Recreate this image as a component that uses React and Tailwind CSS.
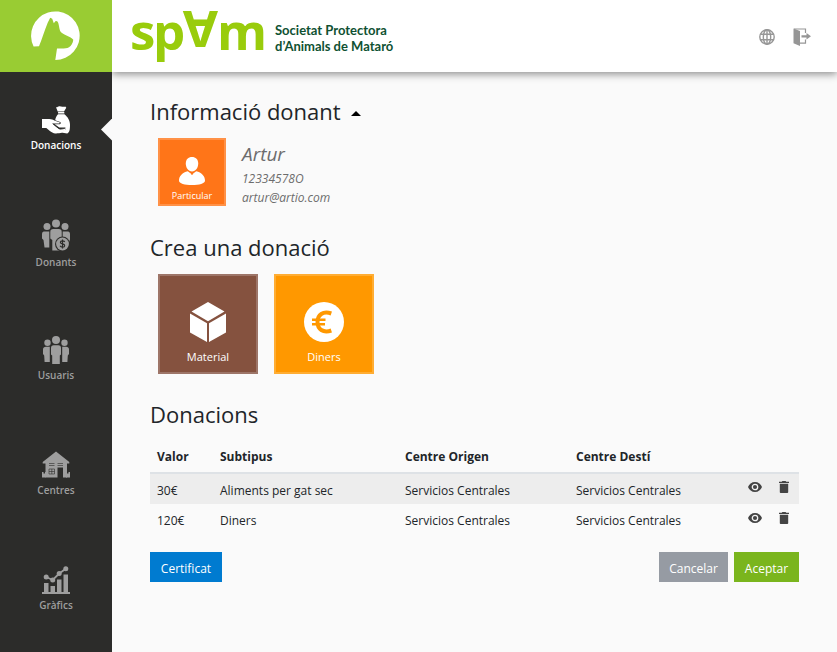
import { useState } from "react";

const HandIcon = () => (
  <svg viewBox="0 0 28 28" className="size-7" fill="currentColor" aria-hidden="true">
    <path d="M14 1.2c1.2.4 1.900-.8 3.300-1 1.200-.2 2 .6 3.200.5 1.200-.2 2 .3 2.800-.1l1 1.200-2.300 3.600h-6.300z" />
    <rect x="16" y="6" width="6.400" height="1.400" rx=".5" />
    <path d="M16 8.300h6.400c3.300 2.500 5.600 6.500 5.600 10.500 0 4.500-.3 7.600-2.800 8.700l-7.700-1.200 5.800-2.700c1-.6.800-2-.5-2.200l-5.500.2-4.600-3.400h5c1.300-.2 1.500-1.800.4-2.200l-4.900-1.700c.3-2.300 1.300-4.500 2.800-6z" />
    <path d="M0 13h7.300c2.200 0 3.800.9 5.600 1.700l4.400 1.600c.8.300.6 1.200-.2 1.200h-6.600l5.800 4.900c.9.700 1.800.9 2.900.6l4.200-.8c.8-.1 1 .8.300 1.100l-4 3.300c-1.200.7-4.800 1-6.300.9-2.200-.2-4-1.400-5.800-2.800L4.300 22H0z" />
    <path d="m10.700 17.700 5.900 4.700c.8.600 1.800.8 2.900.6l3.300-.6" fill="none" stroke="#2c2c2a" strokeWidth=".9" />
  </svg>
);

const DonorsIcon = () => (
  <svg viewBox="0 0 28 31" className="h-8 w-7" fill="currentColor" aria-hidden="true">
    <circle cx="14" cy="4" r="4" />
    <circle cx="5" cy="7" r="3.500" />
    <circle cx="23" cy="7" r="3.500" />
    <path d="M0 14.500C0 12.500 1.200 12 3 12h4.300v16H2.500L1.500 20.500 0 19zM28 14.500c0-2-1.200-2.500-3-2.500h-4.300v16H25l3-8z" />
    <path d="M8.300 12.500c0-2.200 1-3 3-3h5.400c2 0 3 .8 3 3V31h-9.400V20.500l-2-1.500z" />
    <circle cx="20.500" cy="24.500" r="7.500" fill="#2c2c2a" />
    <circle cx="20.500" cy="24.500" r="6.400" />
    <path d="M22.700 22.500c-.4-.8-1.200-1.100-2.200-1.100-2.800 0-2.800 2.700 0 3 3 .4 2.800 3.200 0 3.200-1.200 0-2-.4-2.400-1.300M20.500 20v9" fill="none" stroke="#2c2c2a" strokeWidth="1.200" />
  </svg>
);

const UsersIcon = () => (
  <svg viewBox="0 0 28 28" className="size-7" fill="currentColor" aria-hidden="true">
    <circle cx="14" cy="4" r="4" />
    <circle cx="5.500" cy="6.700" r="3.200" />
    <circle cx="22.500" cy="6.700" r="3.200" />
    <path d="M1 13.500c0-2 1.200-2.800 3-2.800h3.800V26H2.600l-.4-6.400L1 18zM27 13.500c0-2-1.200-2.800-3-2.800h-3.800V26h5.200l.4-6.400L27 18z" />
    <path d="M9 12c0-2 1-2.800 2.700-2.800h4.600c1.700 0 2.700.8 2.700 2.800v6.500l-1.200 1V28h-7.600v-8.500L9 18.500z" />
  </svg>
);

const HouseIcon = () => (
  <svg viewBox="0 0 28 28" className="size-7" fill="currentColor" aria-hidden="true">
    <path d="M14 .5 27.300 11v1.500H25V26.500h-4V16.500h-5.500v10H3.500v-14H.7V11z" />
    <path d="M0 21h1.500v1.500H3V21h1v5.500H0zM24 21h1v1.500h1.500V21H28v5.500h-4z" />
    <path d="M7 12.500h5.500M15.500 12.500H21M15.500 14.500H21M7 14.500h5.500M7 18v5h5.500v-5zM9.800 18v5M7 20.500h5.500" fill="none" stroke="#2c2c2a" strokeWidth=".6" />
  </svg>
);

const ChartIcon = () => (
  <svg viewBox="0 0 28 28" className="size-7" fill="currentColor" aria-hidden="true">
    <path d="M0 26h28v2H0zM2 17h4.500v9H2zM8.500 20H13v6H8.500zM15 13.500h4.500V26H15zM21.500 8.500H26V26h-4.500z" />
    <circle cx="4.200" cy="11" r="2.500" />
    <circle cx="10.700" cy="14" r="2.500" />
    <circle cx="17.200" cy="7.500" r="2.500" />
    <circle cx="23.800" cy="2.700" r="2.500" />
    <path d="m4.200 11 6.500 3 6.500-6.500 6.600-4.800" fill="none" stroke="currentColor" strokeWidth="1.800" />
  </svg>
);

const GlobeIcon = () => (
  <svg viewBox="0 0 16 16" className="size-4" fill="none" stroke="currentColor" strokeWidth="1.400" aria-hidden="true">
    <circle cx="8" cy="8" r="7.200" />
    <ellipse cx="8" cy="8" rx="3.700" ry="7.200" />
    <path d="M1.500 5.300h13M1.500 10.700h13M8 1v14" />
  </svg>
);

const ExitIcon = () => (
  <svg viewBox="0 0 18 18" className="size-[18px]" fill="currentColor" aria-hidden="true">
    <path d="M.5.500 7 3v15l-6.500-2.800z" />
    <path d="M1 1h11.500v4M12.500 11.500v3.700H7" fill="none" stroke="currentColor" strokeWidth="1.200" />
    <path d="M8.500 7.200h5V5L18 8.300l-4.500 3.300V9.400h-5z" />
  </svg>
);

const EyeIcon = () => (
  <svg viewBox="0 0 14 10" className="h-[10px] w-[14px]" aria-hidden="true">
    <path d="M7 0C3.800 0 1.100 2.100 0 5c1.100 2.900 3.800 5 7 5s5.900-2.100 7-5c-1.100-2.900-3.800-5-7-5z" fill="currentColor" />
    <circle cx="7" cy="5" r="2.700" fill="none" stroke="#f4f4f4" strokeWidth="1.300" />
  </svg>
);

const TrashIcon = () => (
  <svg viewBox="0 0 10 12" className="h-3 w-[10px]" fill="currentColor" aria-hidden="true">
    <path d="M0 .8h2.700L3.400 0h3.200l.7.800H10V2H0zM.8 2.800h8.400v8.100c0 .7-.5 1.100-1.100 1.100H1.900C1.300 12 .8 11.600.8 10.900z" />
  </svg>
);

const PersonIcon = () => (
  <svg viewBox="0 0 26 28" className="h-7 w-[26px]" fill="currentColor" aria-hidden="true">
    <path d="M13 0c3.700 0 6.200 2.300 6.200 6.600S16.700 14.500 13 14.500 6.800 10.900 6.800 6.600 9.300 0 13 0z" />
    <path d="M8.800 14.200 13 17.500l4.200-3.300c5.300 1.200 8.800 4.800 8.800 9.300 0 3.300-5.800 4.500-13 4.500S0 26.800 0 23.500c0-4.500 3.500-8.100 8.800-9.300z" />
    <path d="m12.100 15.400.9.900.9-.9-.5 2.600h-.8z" fill="#ff7518" />
  </svg>
);

const BoxIcon = () => (
  <svg viewBox="0 0 36 40" className="h-10 w-9" fill="currentColor" aria-hidden="true">
    <path d="M18 0 34.500 9.500 18 19.300 1.500 9.500zM0 11.500l17 9.800V40L0 30.500zM36 11.500l-17 9.800V40l17-9.500z" />
  </svg>
);

const EuroIcon = () => (
  <svg viewBox="0 0 40 40" className="size-10" aria-hidden="true">
    <circle cx="20" cy="20" r="20" fill="#fff" />
    <path d="M27.300 11.500C19 8.500 13.500 13 13.500 20s5.500 11.500 13.800 8.500" fill="none" stroke="#ff9800" strokeWidth="4" />
    <path d="M8 17.700h13.500M8 22.300H21" fill="none" stroke="#ff9800" strokeWidth="2.500" />
  </svg>
);

const DogLogo = () => (
  <svg viewBox="0 0 50 50" className="size-[50px]" aria-hidden="true">
    <path d="M2.600 35.500A24.300 24.300 0 1 1 24.300 49L26 37.500c4 0 9 .5 12-1.200 2.300-1.400 3.800-4.300 4.300-7.600-3-3.300-8.500-4.500-11.300-6.700-2.600-1.600-2.500-5.300-3.600-9.500-.7-2.200-1.600-2.800-3-2.300l-1.600 2-1.600-4.500-2-.9-2.500 4.900C13.500 19.500 11 28 8 35.300z" fill="#fff" />
  </svg>
);

const Brand = () => (
  <svg viewBox="0 0 134 72" className="h-[72px] w-[134px] overflow-visible" role="img" aria-label="SPAM" fill="#99cc0c" fontFamily="'Open Sans', sans-serif" fontWeight="700" fontSize="51">
    <text y="50" x="-1 22">sp</text>
    <text transform="rotate(180 69 30)" x="51" y="49">A</text>
    <text y="50" x="86">m</text>
  </svg>
);

const nav = [
  { label: "Donacions", Icon: HandIcon, active: true },
  { label: "Donants", Icon: DonorsIcon },
  { label: "Usuaris", Icon: UsersIcon },
  { label: "Centres", Icon: HouseIcon },
  { label: "Gràfics", Icon: ChartIcon },
];

const donations = [
  { value: "30€", subtype: "Aliments per gat sec" },
  { value: "120€", subtype: "Diners" },
];

function Sidebar() {
  return (
    <aside className="relative z-20 w-28 shrink-0 bg-[#2c2c2a]">
      <a href="#inici" aria-label="Inici" className="flex h-[72px] items-center justify-center bg-[#99cc33]">
        <DogLogo />
      </a>
      <nav>
        {nav.map(({ label, Icon, active }) => (
          <a
            key={label}
            href={"#" + label}
            className={
              "relative flex h-[115px] flex-col items-center justify-center gap-[3px] text-[10px] leading-4 font-semibold " +
              (active ? "text-white" : "text-[#9e9e9e]")
            }
          >
            <Icon />
            {label}
            {active && (
              <span className="absolute top-1/2 right-0 h-[22px] w-[11px] -translate-y-1/2 bg-[#fafafa] [clip-path:polygon(100%_0,0_50%,100%_100%)]" />
            )}
          </a>
        ))}
      </nav>
    </aside>
  );
}

function Header() {
  return (
    <header className="z-10 flex h-[72px] items-center justify-between bg-white pr-[26px] pl-[19px] shadow-[0_2px_8px_rgba(0,0,0,0.45)]">
      <div className="flex items-center gap-[10px]">
        <Brand />
        <p className="pt-1 font-[Lato] text-[13px] leading-4 font-bold text-[#0f5132]">
          Societat Protectora
          <br />
          d’Animals de Mataró
        </p>
      </div>
      <div className="flex items-center gap-[18px] pt-[2px] text-[#969696]">
        <button type="button" aria-label="Idioma">
          <GlobeIcon />
        </button>
        <button type="button" aria-label="Sortir">
          <ExitIcon />
        </button>
      </div>
    </header>
  );
}

const heading = "text-[22px] leading-8 font-medium";
const cell = "px-[7px] pt-[3px]";

export default function App() {
  const [open, setOpen] = useState(true);
  return (
    <div className="flex min-h-screen bg-[#fafafa] font-['Open_Sans','Noto_Sans',sans-serif] text-[#212529]">
      <Sidebar />
      <div className="flex min-w-0 flex-1 flex-col">
        <Header />
        <main className="px-[38px] pt-[23px] pb-8">
          <section>
            <h2 className={heading}>
              <button type="button" aria-expanded={open} onClick={() => setOpen(!open)} className="flex items-center gap-[10px]">
                Informació donant
                <svg viewBox="0 0 10 5" className="mt-1 h-[5px] w-[10px]" aria-hidden="true">
                  <path d="M0 5 5 0l5 5z" fill="#000" />
                </svg>
              </button>
            </h2>
            {open && (
              <div className="mt-[11px] ml-2 flex gap-4">
                <div className="flex size-[68px] flex-col items-center justify-end gap-[3px] border-2 border-[#ff9147] bg-[#ff7518] text-[9px] leading-4 text-white">
                  <PersonIcon />
                  Particular
                </div>
                <div className="text-[12px] leading-[19px] text-[#6c6c6c] italic">
                  <p className="pt-1 text-[19px] leading-6">Artur</p>
                  <p className="pt-[3px]">12334578O</p>
                  <p>artur@artio.com</p>
                </div>
              </div>
            )}
          </section>

          <section className="mt-6">
            <h2 className={heading}>Crea una donació</h2>
            <div className="mt-[11px] ml-2 flex gap-4 text-[11px] leading-5 text-white">
              <button type="button" className="flex size-[100px] flex-col items-center justify-end gap-[5px] border-2 border-[#9d7568] bg-[#85523f] pb-[5px]">
                <BoxIcon />
                Material
              </button>
              <button type="button" className="flex size-[100px] flex-col items-center justify-end gap-[5px] border-2 border-[#ffad33] bg-[#ff9800] pb-[5px]">
                <EuroIcon />
                Diners
              </button>
            </div>
          </section>

          <section className="mt-6">
            <h2 className={heading}>Donacions</h2>
            <table className="mt-3 w-full table-fixed text-left text-[12px] leading-5">
              <colgroup>
                <col className="w-[63px]" />
                <col className="w-[185px]" />
                <col className="w-[171px]" />
                <col />
                <col className="w-[58px]" />
              </colgroup>
              <thead>
                <tr className="h-[31px] border-b-2 border-[#dee2e6] font-bold">
                  <th className="px-[7px]">Valor</th>
                  <th className="px-[7px]">Subtipus</th>
                  <th className="px-[7px]">Centre Origen</th>
                  <th className="px-[7px]">Centre Destí</th>
                  <th aria-label="Accions" />
                </tr>
              </thead>
              <tbody>
                {donations.map((d) => (
                  <tr key={d.value} className="h-[31px] odd:bg-[#ededed]">
                    <td className={cell}>{d.value}</td>
                    <td className={cell}>{d.subtype}</td>
                    <td className={cell}>Servicios Centrales</td>
                    <td className={cell}>Servicios Centrales</td>
                    <td>
                      <div className="flex items-center justify-end gap-[17px] pr-[10px] pb-1 text-[#444]">
                        <button type="button" aria-label="Veure">
                          <EyeIcon />
                        </button>
                        <button type="button" aria-label="Eliminar">
                          <TrashIcon />
                        </button>
                      </div>
                    </td>
                  </tr>
                ))}
              </tbody>
            </table>
            <div className="mt-[17px] flex gap-[6px] text-[12px] text-white">
              <button type="button" className="mr-auto w-[72px] bg-[#007bd0] pt-[3px] leading-[27px]">Certificat</button>
              <button type="button" className="w-[69px] bg-[#969ba3] pt-[3px] leading-[27px]">Cancelar</button>
              <button type="button" className="w-[65px] bg-[#7ab51d] pt-[3px] leading-[27px]">Aceptar</button>
            </div>
          </section>
        </main>
      </div>
    </div>
  );
}
